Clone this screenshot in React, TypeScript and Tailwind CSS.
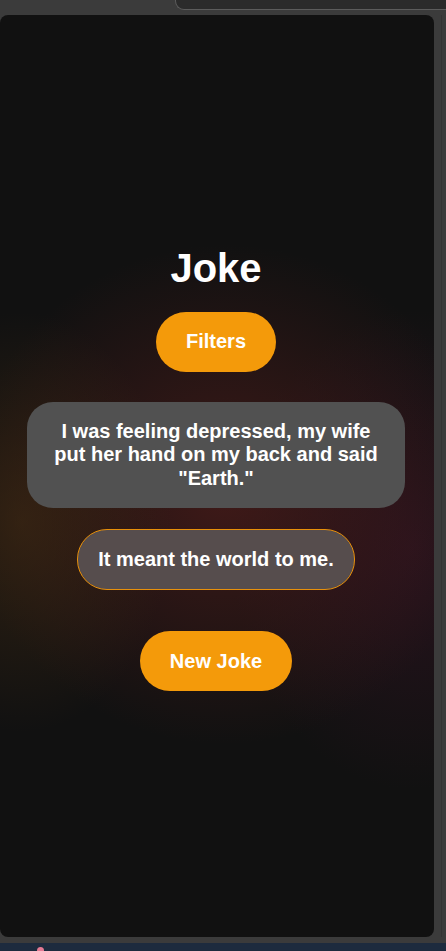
import React from 'react';

const App: React.FC = () => {
  return (
    <div className="w-[446px] h-[951px] bg-[#3b3b3b] flex flex-col overflow-hidden font-['Liberation_Sans',Arial,sans-serif]">
      {/* Browser top strip */}
      <div className="relative h-[15px] shrink-0">
        <div className="absolute left-[175px] right-0 top-0 h-[10px] bg-[#2b2b2b] border-b border-l border-[#5c5c5c] rounded-bl-[9px]" />
      </div>

      <div className="flex flex-1 min-h-0">
        {/* App card */}
        <div className="w-[434px] h-[922px] rounded-[8px] bg-[#111111] bg-[radial-gradient(ellipse_150px_210px_at_5%_55%,rgba(72,46,18,0.55),transparent),radial-gradient(ellipse_260px_250px_at_52%_52%,rgba(78,28,26,0.75),transparent),radial-gradient(ellipse_180px_240px_at_95%_58%,rgba(60,20,40,0.5),transparent)] flex flex-col items-center justify-center pb-[17px] pr-[2px] text-white">
          <h1 className="text-[40px] leading-[48px] font-bold">Joke</h1>

          <button className="mt-[20px] h-[60px] px-[30px] rounded-full bg-[#f49a0a] text-[20px] leading-[23px] font-bold">
            Filters
          </button>

          <div className="mt-[30px] w-[378px] rounded-[26px] bg-[#515151] px-5 py-[18px] text-center text-[20px] leading-[23.5px] font-bold">
            I was feeling depressed, my wife put her hand on my back and said "Earth."
          </div>

          <div className="mt-[21px] rounded-[30px] border border-[#e8900a] bg-[#564d4d] px-5 py-[18px] text-[20px] leading-[23px] font-bold">
            It meant the world to me.
          </div>

          <button className="mt-[41px] h-[60px] px-[30px] rounded-full bg-[#f49a0a] text-[20px] leading-[23px] font-bold">
            New Joke
          </button>
        </div>

        {/* Right edge of window */}
        <div className="flex-1 flex">
          <div className="w-[7px]" />
          <div className="w-px bg-[#333333]" />
        </div>
      </div>

      <div className="h-[6px] shrink-0" />
      <div className="h-[8px] shrink-0 bg-[#1d2b3e] relative">
        <div className="absolute left-[37px] top-[4px] w-[7px] h-[4px] rounded-t-full bg-[#e57a93]" />
      </div>
    </div>
  );
};

export default App;
